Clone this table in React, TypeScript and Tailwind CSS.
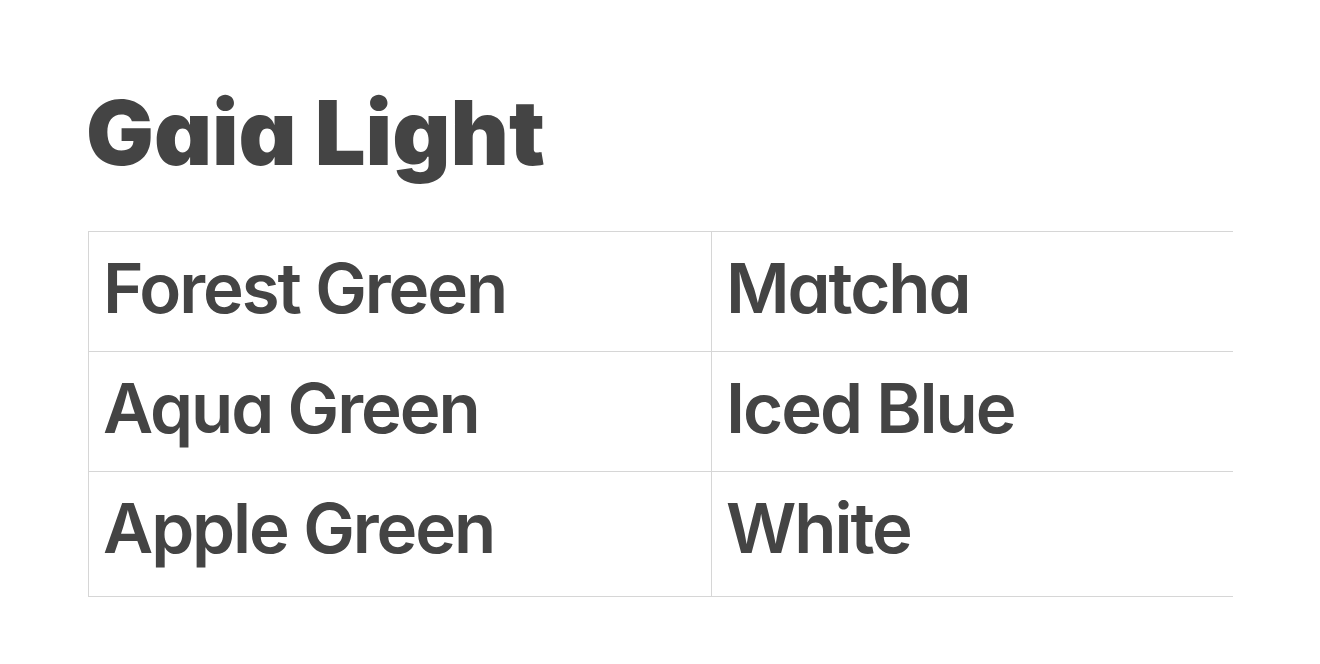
const ROWS = [
  ['Forest Green', 'Matcha'],
  ['Aqua Green', 'Iced Blue'],
  ['Apple Green', 'White'],
]

export default function App() {
  return (
    <div className="min-h-screen bg-white pl-[88px] pt-[78px] text-[#444444] font-['Inter',sans-serif] [font-feature-settings:'cv11']">
      <h1 className="-ml-[2px] text-[90px] font-black leading-[110px]">Gaia Light</h1>

      <div className="mt-[43px] w-[1145px] overflow-hidden">
        <div className="grid grid-cols-[623px_522px] border-l border-t border-[#d6d6d6]">
          {ROWS.map((row, i) =>
            row.map((cell, j) => (
              <div
                key={`${i}-${j}`}
                className={`flex items-center pl-[14px] border-b border-[#d6d6d6] ${j === 0 ? 'border-r' : ''} ${i === ROWS.length - 1 ? 'h-[125px] pb-[12px]' : 'h-[120px] pb-[7px]'}`}
              >
                <span className="text-[69px] font-semibold leading-none tracking-[-0.03em]">{cell}</span>
              </div>
            ))
          )}
        </div>
      </div>
    </div>
  )
}
